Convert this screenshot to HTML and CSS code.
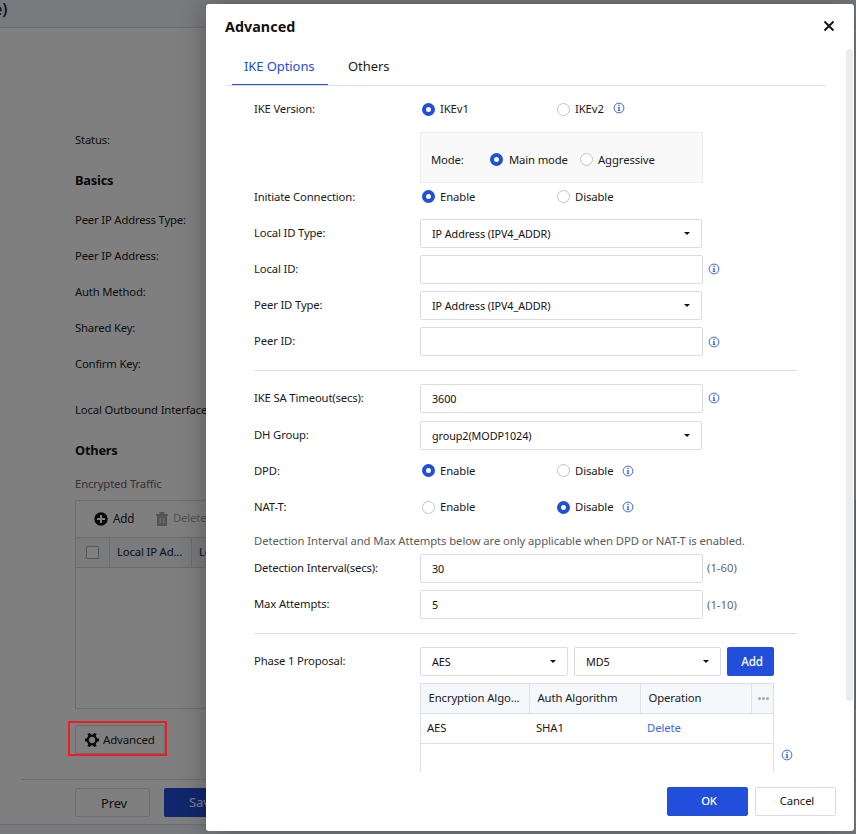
FILE: index.html
```html
<!DOCTYPE html>
<html lang="en">
<head>
<meta charset="utf-8">
<title>Advanced</title>
<link rel="stylesheet" href="styles.css">
</head>
<body>
<svg class="defs" width="0" height="0">
  <symbol id="info" viewBox="0 0 12 12">
    <circle cx="6" cy="6" r="4.9" fill="none" stroke="#4068e0" stroke-width="1"/>
    <path d="M5.4 2.800h1.300v1.200H5.400zM4.800 4.900h1.900v3.400h.6V9H4.700v-.7h.7V5.600h-.6z" fill="#2f5be0"/>
  </symbol>
</svg>

<div class="page">
  <header class="page-head">e)</header>
  <main class="page-body">
    <div class="p-row first">Status:</div>
    <h2>Basics</h2>
    <div class="p-row">Peer IP Address Type:</div>
    <div class="p-row">Peer IP Address:</div>
    <div class="p-row">Auth Method:</div>
    <div class="p-row">Shared Key:</div>
    <div class="p-row">Confirm Key:</div>
    <div class="p-row outbound">Local Outbound Interface:</div>
    <h2 class="others">Others</h2>
    <div class="p-sub">Encrypted Traffic</div>
    <div class="traffic">
      <div class="tools">
        <svg width="14" height="14" viewBox="0 0 14 14"><circle cx="7" cy="7" r="6.7" fill="#111"/><path d="M7 3v8M3 7h8" stroke="#fff" stroke-width="2"/></svg>
        <span class="t-add">Add</span>
        <svg class="trash" width="12" height="14" viewBox="0 0 12 14"><path d="M3.500 0h5v2H12v2H0V2h3.500zM1 4h10v10H1z" fill="#a8a8a8"/><path d="M4.200 6v5.500M7.800 6v5.500" stroke="#eee" stroke-width="1.200"/></svg>
        <span class="t-del">Delete</span>
      </div>
      <div class="t-head">
        <div class="t-check"><i></i></div>
        <div class="t-cell">Local IP Ad...</div>
        <div class="t-cell last">Local Subnet</div>
      </div>
    </div>
    <div class="adv-btn">
      <svg width="14" height="14" viewBox="0 0 14 14"><circle cx="7" cy="7" r="4.300" fill="none" stroke="#111" stroke-width="2.200"/><path d="M3.600 .4l1.500 2.600M10.400 .4L8.900 3M3.600 13.600l1.500-2.600M10.400 13.600L8.900 11M0 7h2.500M11.500 7H14" stroke="#111" stroke-width="2.800"/></svg>
      <span>Advanced</span>
    </div>
  </main>
  <footer class="page-foot">
    <div class="prev">Prev</div>
    <div class="save">Save</div>
  </footer>
  <div class="page-edge"></div>
</div>
<div class="mask"></div>
<div class="highlight"></div>

<section class="dialog">
  <header class="d-head">
    <h1>Advanced</h1>
    <svg width="12" height="12" viewBox="0 0 12 12"><path d="M1.500 1.500l9 9M10.500 1.500l-9 9" stroke="#111" stroke-width="1.900"/></svg>
  </header>
  <nav class="tabs">
    <span class="tab on">IKE Options</span>
    <span class="tab">Others</span>
  </nav>
  <div class="d-body">
    <div class="row r-version">
      <label>IKE Version:</label>
      <span class="radio on"></span><span class="opt">IKEv1</span>
      <span class="radio"></span><span class="opt auto">IKEv2</span>
      <svg class="info up"><use href="#info"/></svg>
    </div>
    <div class="mode">
      <span class="mode-label">Mode:</span>
      <span class="radio on"></span><span class="mode-opt">Main mode</span>
      <span class="radio"></span><span class="opt auto">Aggressive</span>
    </div>
    <div class="row r-init">
      <label>Initiate Connection:</label>
      <span class="radio on"></span><span class="opt">Enable</span>
      <span class="radio"></span><span class="opt auto">Disable</span>
    </div>
    <div class="row field"><label>Local ID Type:</label><div class="select"><span>IP Address (IPV4_ADDR)</span></div></div>
    <div class="row field"><label>Local ID:</label><div class="input"></div><svg class="info"><use href="#info"/></svg></div>
    <div class="row field"><label>Peer ID Type:</label><div class="select"><span>IP Address (IPV4_ADDR)</span></div></div>
    <div class="row field"><label>Peer ID:</label><div class="input"></div><svg class="info low"><use href="#info"/></svg></div>
    <hr>
    <div class="row field"><label>IKE SA Timeout(secs):</label><div class="input"><span>3600</span></div><svg class="info"><use href="#info"/></svg></div>
    <div class="row field dh"><label>DH Group:</label><div class="select"><span>group2(MODP1024)</span></div></div>
    <div class="row r-dpd">
      <label>DPD:</label>
      <span class="radio on"></span><span class="opt">Enable</span>
      <span class="radio"></span><span class="opt auto">Disable</span>
      <svg class="info"><use href="#info"/></svg>
    </div>
    <div class="row r-nat">
      <label>NAT-T:</label>
      <span class="radio"></span><span class="opt">Enable</span>
      <span class="radio on"></span><span class="opt auto">Disable</span>
      <svg class="info"><use href="#info"/></svg>
    </div>
    <p class="note">Detection Interval and Max Attempts below are only applicable when DPD or NAT-T is enabled.</p>
    <div class="row field"><label>Detection Interval(secs):</label><div class="input"><span>30</span></div><span class="range">(1-60)</span></div>
    <div class="row field"><label>Max Attempts:</label><div class="input"><span>5</span></div><span class="range low">(1-10)</span></div>
    <hr>
    <div class="row field"><label>Phase 1 Proposal:</label>
      <div class="select half"><span>AES</span></div>
      <div class="select half b"><span>MD5</span></div>
      <div class="add">Add</div>
    </div>
    <div class="proposal">
      <div class="grid">
        <div class="g-row g-head"><span>Encryption Algo...</span><span>Auth Algorithm</span><span>Operation</span><span class="dots"><i></i><i></i><i></i></span></div>
        <div class="g-row"><span>AES</span><span>SHA1</span><span class="link">Delete</span><span></span></div>
      </div>
      <svg class="info"><use href="#info"/></svg>
    </div>
  </div>
  <footer class="d-foot">
    <div class="btn primary">OK</div>
    <div class="btn">Cancel</div>
  </footer>
  <div class="scroll"></div>
</section>
</body>
</html>
```
FILE: styles.css
```css
* { box-sizing: border-box; }
body {
  margin: 0; width: 856px; height: 834px; overflow: hidden; position: relative;
  font: 11.3px/20px "Noto Sans", "Open Sans", sans-serif; color: #1a1a1a; white-space: nowrap;
  letter-spacing: -.15px;
}
h1, h2, p { margin: 0; }
svg { display: block; flex: none; }
.defs { position: absolute; }

.page { height: 834px; background: #fff; }
.page-head { height: 28px; background: #f2f5fd; border-bottom: 1px solid #dadde8; font-size: 16px; font-weight: 600; line-height: 18px; text-indent: -7px; letter-spacing: 0; color: #222b45; }
.page-body { height: 751px; padding: 102px 0 0 75px; }
.p-row { height: 36px; line-height: 20px; letter-spacing: -.18px; }
.p-row.first { height: 40px; }
h2 { font-size: 12.8px; line-height: 20px; height: 40px; font-weight: 700; color: #111; letter-spacing: -.2px; }
.p-row.outbound { margin-top: 10px; height: 40px; letter-spacing: -.15px; }
h2.others { height: 34px; }
.p-sub { color: #666; height: 26px; }
.traffic { height: 209px; border: 1px solid #d8dbe8; }
.tools { height: 36px; display: flex; align-items: center; padding-left: 18px; line-height: 18px; }
.tools span { position: relative; top: -1px; }
.t-add { margin-left: 5px; width: 43px; font-size: 11.700px; }
.t-del { margin-left: 5px; color: #aaa; }
.t-head { display: flex; height: 31px; border: solid #d8dbe8; border-width: 1px 0; background: #f3f6fa; line-height: 28px; }
.t-check { width: 34px; border-right: 1px solid #d8dbe8; padding: 8px 0 0 10px; }
.t-check i { display: block; width: 13px; height: 13px; border: 1px solid #aaa; border-radius: 1px; background: #fff; }
.t-cell { width: 82px; padding-left: 7px; border-right: 1px solid #d8dbe8; }
.adv-btn { margin-top: 16px; width: 90px; height: 29px; border: 1px solid #ddd; border-radius: 2px; display: flex; align-items: center; padding-left: 9px; font-size: 11.500px; }
.adv-btn span { margin-left: 4px; }
.page-foot { margin-left: 21px; height: 45px; border-top: 1px solid #ddd; padding: 8px 0 0 54px; display: flex; font-size: 13px; }
.page-edge { height: 10px; border-top: 1px solid #dadde8; background: #f2f5fd; }
.prev { width: 75px; height: 29px; border: 1px solid #ddd; border-radius: 2px; text-align: center; line-height: 28px; padding-left: 3px; }
.save { margin-left: 14px; width: 75px; height: 29px; background: #214edb; color: #fff; border-radius: 2px; padding-left: 25px; line-height: 29px; }
.mask { position: absolute; inset: 0; background: rgba(0,0,0,.5); }
.highlight { position: absolute; left: 68px; top: 721px; width: 99px; height: 35px; border: 2px solid #ee1c25; }

.dialog { position: absolute; left: 206px; top: 4px; width: 648px; height: 827px; background: #fff; border-radius: 3px; box-shadow: 0 0 30px rgba(0,0,0,.3); }
.d-head { height: 45px; display: flex; justify-content: space-between; align-items: center; padding: 0 19px; }
.d-head svg { margin-top: -1px; }
h1 { font-size: 14.300px; font-weight: 700; color: #111; line-height: 20px; letter-spacing: .05px; }
.tabs { display: flex; height: 37px; margin: 0 28px 0 19px; border-bottom: 1px solid #dfe1ef; font-size: 13px; line-height: 34px; padding-left: 7px; letter-spacing: -.08px; }
.tab { width: 96px; height: 36px; padding-left: 12px; margin-right: 8px; }
.tab.on { color: #214edb; border-bottom: 1px solid #214edb; }
.d-body { height: 686px; overflow: hidden; padding: 5px 0 0 48px; }
.row { display: flex; align-items: center; }
.row label { width: 166px; flex: none; }
.field label { line-height: 18px; margin-bottom: 2px; }
.r-version { height: 36px; }
.radio { flex: none; width: 13px; height: 13px; border: 1px solid #c4c4c4; border-radius: 50%; background: #fff; }
.radio.on { border: 4px solid #214edb; }
.row > .radio { margin-left: 2px; }
.opt { width: 115px; margin-left: 5px; letter-spacing: -.1px; }
.opt.auto { width: auto; }
.info { width: 12px; height: 12px; margin: 0 0 1px 5px; }
.info.low { margin-bottom: 0; }
.row .opt + .info { margin: 0 0 0 9px; }
.row .opt + .info.up { margin-top: -2px; }
.mode { margin: 5px 0 0 166px; width: 283px; height: 51px; border: 1px solid #ececec; background: #f9f9f9; display: flex; align-items: center; padding: 3px 0 0 10px; }
.mode-label { width: 59px; }
.mode-opt { margin-left: 6px; width: 71px; }
.mode span:not(.radio) { padding-top: 1px; }
.r-init { height: 28px; margin-bottom: 8px; }
.r-init .radio { margin-bottom: 1px; }
.field { height: 29px; margin-bottom: 7px; }
.input, .select { height: 29px; border: 1px solid #dcdcdc; border-radius: 2px; background: #fff; padding: 0 11px; line-height: 27px; font-size: 10.800px; color: #111; letter-spacing: -.08px; }
.input { width: 283px; }
.select { width: 282px; display: flex; justify-content: space-between; align-items: center; }
.select::after { content: ""; border: solid transparent; border-width: 3px 3px 0; border-top-color: #111; }
.select.half { width: 148px; }
.select.half.b { width: 147px; margin-left: 6px; }
hr { border: 0; height: 1px; background: #dcdcdc; width: 543px; margin: 14px 0 13px; }
.dh { margin-top: 8px; margin-bottom: 6px; }
.dh label { margin-bottom: 1px; }
.r-dpd { height: 29px; margin-bottom: 8px; }
.r-nat { height: 28px; margin-bottom: 10px; }
.note { height: 23px; line-height: 20px; color: #5c5c5c; letter-spacing: -.09px; }
.range { margin: 0 0 2px 4px; color: #666; letter-spacing: 0; }
.range.low { margin-bottom: 0; }
.add { margin-left: 6px; width: 47px; height: 29px; line-height: 28px; background: #214edb; color: #fff; border-radius: 2px; text-align: center; font-size: 11.700px; font-weight: 500; padding-left: 3px; }
.proposal { display: flex; margin-left: 166px; letter-spacing: -.1px; }
.proposal .info { margin: 66px 0 0 7px; }
.grid { width: 354px; height: 180px; border: 1px solid #dcdfec; }
.g-row { display: grid; grid-template-columns: 109px 111px 111px 21px; height: 30px; border-bottom: 1px solid #dcdfec; line-height: 28px; }
.g-row span { padding-left: 6px; }
.g-head { background: #f4f8fb; }
.g-head span { padding-left: 7.500px; border-right: 1px solid #dcdfec; }
.g-head .dots { border: 0; padding: 0 0 0 6px; display: flex; gap: 1px; align-items: center; }
.dots i { width: 3px; height: 3px; border-radius: 50%; background: #aaa; }
.link { color: #3b66f5; }
.d-foot { height: 44px; margin-top: 15px; display: flex; gap: 7px; justify-content: flex-end; padding-right: 18px; }
.btn { width: 81px; height: 29px; border: 1px solid #dcdcdc; border-radius: 2px; line-height: 26px; text-align: center; padding-left: 3px; }
.btn.primary { background: #214edb; border-color: #214edb; color: #fff; font-weight: 500; }
.scroll { position: absolute; right: 1px; top: 45px; width: 7px; height: 652px; border-radius: 4px; background: #ebecee; }
```
